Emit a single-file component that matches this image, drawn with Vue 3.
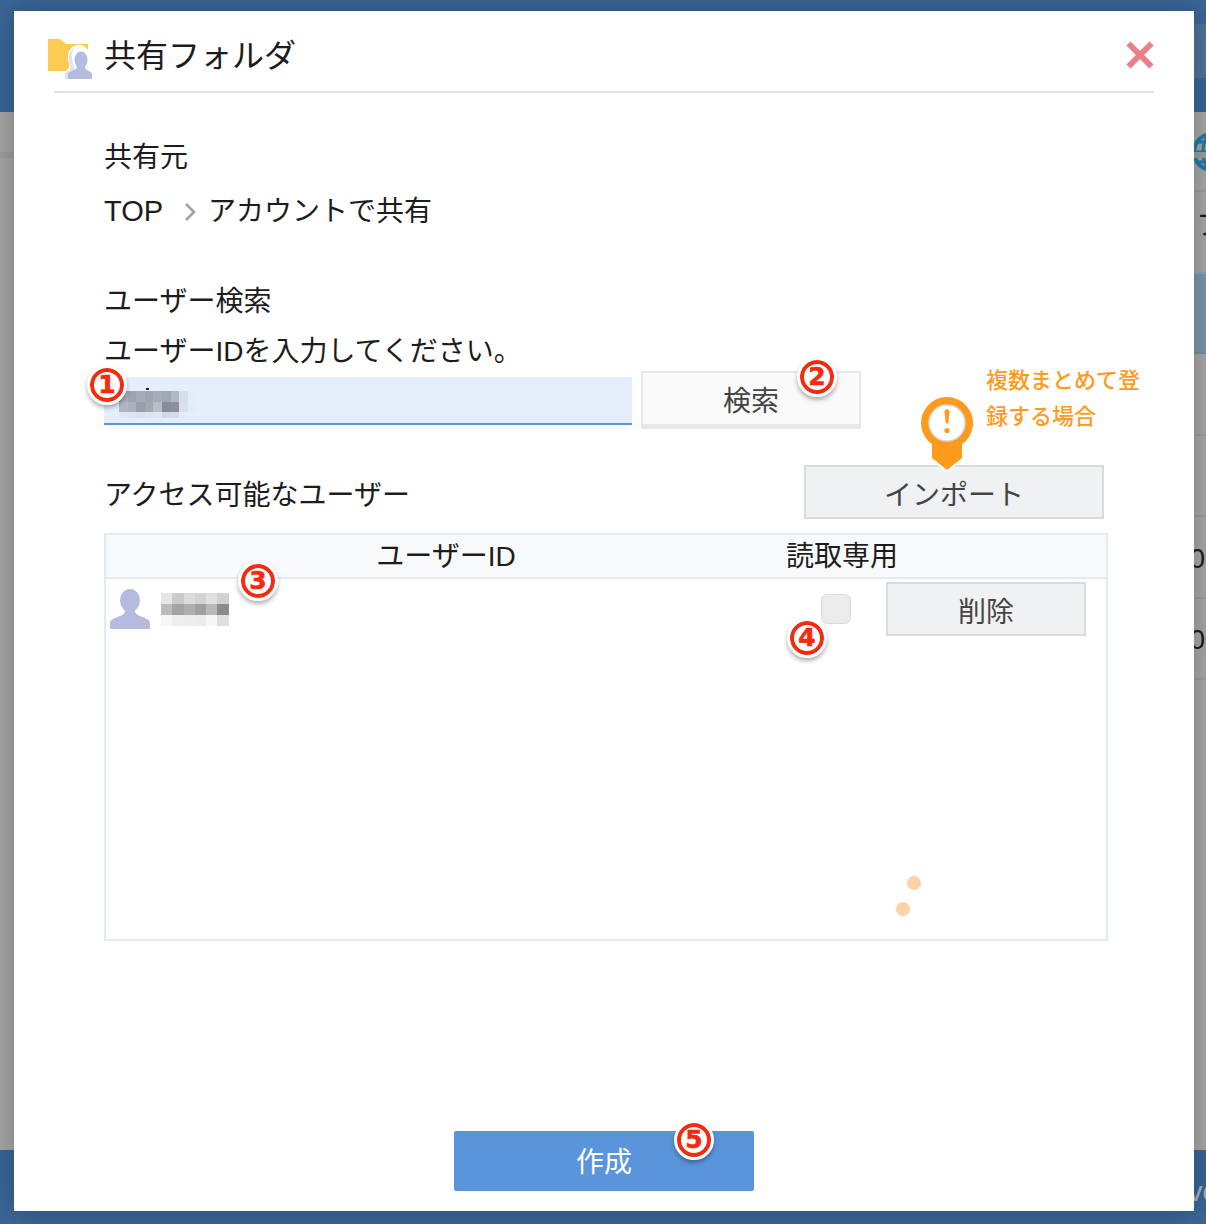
<script setup>
const badges = [
  { n: '1', x: 107, y: 385 },
  { n: '2', x: 817, y: 377 },
  { n: '3', x: 258, y: 581 },
  { n: '4', x: 807, y: 638 },
  { n: '5', x: 694, y: 1140 }
]
const inputMosaic = {
  cols: 9,
  w: 8.6,
  rows: [
    { h: 11, c: ['#a9aebb', '#9ea3af', '#a7acb9', '#a0a5b1', '#a7acba', '#a2a7b3', '#b3b8c4', '#d7deea', '#e4edf9'] },
    { h: 10, c: ['#b1b6c3', '#aab0bc', '#9a9fab', '#a2a7b2', '#b8bdc9', '#888c98', '#8c909c', '#d9e0ec', '#e3ecf8'] },
    { h: 6, c: ['#dfe7f3', '#dde5f1', '#dae2ee', '#dce4f0', '#dfe7f3', '#d3dae6', '#d6dde9', '#e3ecf8', '#e5effc'] }
  ]
}
const userMosaic = {
  cols: 6,
  w: 11.3,
  rows: [
    { h: 11, c: ['#e6e6e6', '#cbcbcb', '#dcdcdc', '#d3d3d3', '#e0e0e0', '#d2d2d2'] },
    { h: 11, c: ['#bcbcbc', '#a4a4a4', '#aeaeae', '#a0a0a0', '#b8b8b8', '#8c8c8c'] },
    { h: 11, c: ['#f6f6f6', '#efefef', '#ededed', '#ebebeb', '#f6f6f6', '#dfdfdf'] }
  ]
}
const mosaicCells = (m) => m.rows.flatMap((r, i) => r.c.map((color, j) => ({
  key: i + '-' + j,
  color,
  h: r.h,
  w: m.w
})))
const inputCells = mosaicCells(inputMosaic)
const userCells = mosaicCells(userMosaic)
</script>

<template>
  <div class="page">
    <div class="backdrop">
      <div class="top-bar"><div class="top-band"></div></div>
      <div class="sub-bar">
        <svg class="globe" viewBox="0 0 44 44" width="44" height="44">
          <circle cx="22" cy="22" r="18" fill="none" stroke="#1f7ba5" stroke-width="4" />
          <ellipse cx="22" cy="22" rx="9" ry="18" fill="none" stroke="#1f7ba5" stroke-width="3" />
          <path d="M3 22H41M7 12H37M7 32H37" fill="none" stroke="#1f7ba5" stroke-width="3" />
        </svg>
      </div>
      <div class="strip"></div>
      <div class="bg-list">
        <div class="bg-row first"></div>
        <div class="bg-row tall"><span class="bg-kana">フ</span></div>
        <div class="bg-row selected"></div>
        <div class="bg-row"></div>
        <div class="bg-row"></div>
        <div class="bg-row"><span class="bg-zero">0</span></div>
        <div class="bg-row"><span class="bg-zero">0</span></div>
      </div>
      <div class="foot-bar"><span class="foot-text">ve</span></div>
    </div>

    <div class="modal">
      <header class="title-row">
        <svg class="folder" viewBox="0 0 44 40" width="44" height="40">
          <path d="M0 0H12L18 5H40V32H0Z" fill="#fdcb52" />
          <path d="M16 40V33C21 30 22 28 21 24C19 20 19 8 29 6C36 5 41 10 41 16L44 40Z" fill="#fff" />
          <path d="M17 40V34C21 32 23 30 22 26C20 22 20 11 26 9C22 16 25 26 27 30L26 40Z" fill="#e0e3f2" />
          <ellipse cx="33" cy="21" rx="6.500" ry="8.500" fill="#b5bbdf" />
          <path d="M20 40V35C20 33 25 32 28 30C29 29 29 28 29 26H37C37 28 37 29 38 30C40 32 44 33 44 35V40Z" fill="#b5bbdf" />
        </svg>
        <h1 class="title">共有フォルダ</h1>
        <svg class="close" viewBox="0 0 28 28" width="28" height="28">
          <path d="M2.500 2.500L25.500 25.500M25.500 2.500L2.500 25.500" stroke="#e8808c" stroke-width="6" fill="none" />
        </svg>
      </header>

      <div class="body">
        <p class="line first-line">共有元</p>
        <div class="line crumbs">
          <span class="top-word">TOP</span>
          <svg class="chev" viewBox="0 0 12 20" width="12" height="20">
            <path d="M2 2L10 10L2 18" fill="none" stroke="#a3a3a3" stroke-width="2.600" />
          </svg>
          <span>アカウントで共有</span>
        </div>
        <p class="line section">ユーザー検索</p>
        <p class="line prompt">ユーザーIDを入力してください。</p>

        <div class="search-row">
          <div class="input">
            <i class="input-dot"></i>
            <div class="mosaic input-mosaic">
              <i v-for="c in inputCells" :key="c.key" :style="{ background: c.color, width: c.w + 'px', height: c.h + 'px' }"></i>
            </div>
          </div>
          <button class="search-btn">検索</button>
        </div>

        <div class="access-row">
          <span class="access-label">アクセス可能なユーザー</span>
          <button class="btn import-btn">インポート</button>
        </div>

        <div class="table">
          <div class="thead">
            <span class="th-user">ユーザーID</span>
            <span class="th-read">読取専用</span>
          </div>
          <div class="tr">
            <svg class="avatar" viewBox="0 0 42 40" width="40" height="40" preserveAspectRatio="none">
              <ellipse cx="21" cy="11.500" rx="10.500" ry="11.500" fill="#b5bbdf" />
              <path d="M0 40V34C0 30 6 29 13 26C15 25 16 23 16 20H26C26 23 27 25 29 26C36 29 42 30 42 34V40Z" fill="#b5bbdf" />
            </svg>
            <div class="mosaic user-mosaic">
              <i v-for="c in userCells" :key="c.key" :style="{ background: c.color, width: c.w + 'px', height: c.h + 'px' }"></i>
            </div>
            <span class="check"></span>
            <button class="btn delete-btn">削除</button>
          </div>
          <i class="dot dot-a"></i>
          <i class="dot dot-b"></i>
        </div>

        <div class="footer"><button class="create">作成</button></div>
      </div>

      <div class="callout">
        <svg class="pin" viewBox="0 0 60 82" width="60" height="82">
          <path d="M15 49.200A26 26 0 1 1 45 49.200V63L30 75L15 63Z" fill="#fe9a1c" stroke="#fff" stroke-width="4" paint-order="stroke" />
          <circle cx="30" cy="28" r="18" fill="#fff" stroke="#d9d9d9" stroke-width="1.500" />
          <path d="M27.500 16.500C27.500 13.500 32.500 13.500 32.500 16.500L31.300 28.500H28.700Z" fill="#fe9a1c" />
          <circle cx="30" cy="35.500" r="2.600" fill="#fe9a1c" />
        </svg>
        <p class="callout-text">複数まとめて登録する場合</p>
      </div>

      <span v-for="b in badges" :key="b.n" class="badge" :style="{ left: b.x - 31 + 'px', top: b.y - 28 + 'px' }">{{ b.n }}</span>
    </div>
  </div>
</template>

<style>
html, body { margin: 0; background: #a5a5a5; }
</style>

<style scoped>
.page {
  position: relative;
  width: 1206px;
  height: 1224px;
  overflow: hidden;
  font-family: "Liberation Sans", "Noto Sans CJK JP", sans-serif;
  color: #1c1c1c;
}
.backdrop {
  display: flex;
  flex-direction: column;
  height: 100%;
  background: #a5a5a5;
}
.top-bar {
  height: 112px;
  background: #3a6596;
  padding-top: 24px;
  box-sizing: border-box;
}
.top-band {
  height: 54px;
  margin-left: 1194px;
  background: #4d7299;
}
.sub-bar {
  height: 40px;
  display: flex;
  justify-content: flex-end;
  align-items: center;
}
.globe {
  flex: none;
  margin-top: 40px;
  margin-right: -28px;
}
.strip {
  height: 6px;
  background: #9b9b9b;
}
.bg-list {
  flex: 1;
  margin-left: 400px;
  display: flex;
  flex-direction: column;
  overflow: hidden;
}
.bg-row {
  flex: none;
  height: 81.500px;
  box-sizing: border-box;
  border-bottom: 2px solid #939ba3;
  display: flex;
  justify-content: flex-end;
  align-items: center;
}
.bg-row.first {
  height: 34px;
  border-bottom-color: #979a9d;
}
.bg-row.tall {
  height: 82px;
  border-bottom: 2px solid #8fa3b3;
  align-items: flex-start;
  padding-top: 14px;
}
.bg-row.selected {
  height: 80px;
  background: #7797aa;
  border-bottom-color: #6f8fa6;
}
.bg-kana {
  font-size: 28px;
  line-height: 40px;
  margin-right: -18px;
}
.bg-zero {
  font-size: 28px;
  margin-right: 1px;
  padding-top: 4px;
}
.foot-bar {
  height: 74px;
  flex: none;
  background: #3a6596;
  display: flex;
  justify-content: flex-end;
  align-items: center;
  overflow: hidden;
}
.foot-text {
  color: #a9b3bd;
  font-size: 28px;
  margin-right: -12px;
  margin-top: 10px;
}

.modal {
  position: absolute;
  left: 14px;
  top: 11px;
  width: 1180px;
  height: 1200px;
  background: #fff;
  box-shadow: 0 0 24px rgba(0, 0, 0, 0.25);
  display: flex;
  flex-direction: column;
}
.title-row {
  flex: none;
  height: 82px;
  margin: 0 40px;
  box-sizing: border-box;
  border-bottom: 2px solid #dde2e6;
  display: flex;
  align-items: flex-start;
}
.folder {
  flex: none;
  margin: 28px 0 0 -6px;
}
.title {
  margin: 24px 0 0 12px;
  font-size: 32px;
  line-height: 42px;
  font-weight: 400;
  flex: 1;
}
.close {
  flex: none;
  margin-top: 30px;
}
.body {
  flex: 1;
  display: flex;
  flex-direction: column;
  padding: 0 86px 20px 90px;
  min-height: 0;
}
.line {
  margin: 0;
  font-size: 28px;
  line-height: 40px;
}
.first-line { margin-top: 45px; padding-bottom: 1px; }
.crumbs {
  margin-top: 13px;
  display: flex;
  align-items: center;
}
.top-word { font-size: 29px; line-height: 38px; margin-top: -3px; }
.chev { margin: 0 12px 0 21px; flex: none; }
.section { margin-top: 50px; }
.prompt { margin-top: 10px; }
.search-row {
  margin-top: -1px;
  display: flex;
  align-items: flex-start;
  gap: 9px;
}
.input {
  position: relative;
  width: 528px;
  height: 48px;
  margin-top: 6px;
  box-sizing: border-box;
  background: #e5effc;
  border-bottom: 2px solid #5b95da;
}
.input-dot {
  position: absolute;
  left: 42px;
  top: 11px;
  width: 3px;
  height: 2px;
  background: #222;
}
.mosaic {
  display: flex;
  flex-wrap: wrap;
  flex: none;
}
.mosaic i { display: block; flex: none; }
.input-mosaic {
  position: absolute;
  left: 15px;
  top: 14px;
  width: 77.400px;
}
.search-btn {
  width: 220px;
  height: 58px;
  box-sizing: border-box;
  background: #fafafa;
  border: 2px solid #e7e7e7;
  border-bottom-width: 5px;
  color: #444;
  font: inherit;
  font-size: 28px;
  padding: 0;
}
.access-row {
  margin-top: 36px;
  width: 1000px;
  display: flex;
  align-items: center;
  justify-content: space-between;
}
.access-label {
  font-size: 28px;
  line-height: 40px;
  padding-top: 7px;
}
.btn {
  box-sizing: border-box;
  background: #f0f1f3;
  border: 2px solid #dadbdc;
  color: #444;
  font: inherit;
  font-size: 28px;
  padding: 2px 0 0;
}
.import-btn { width: 300px; height: 54px; margin-right: 0; }
.table {
  position: relative;
  margin-top: 14px;
  width: 1004px;
  height: 408px;
  box-sizing: border-box;
  border: 2px solid #e1ebf3;
}
.thead {
  height: 44px;
  padding-top: 1px;
  box-sizing: border-box;
  background: #f8f9fa;
  border-bottom: 2px solid #e1ebf3;
  display: grid;
  grid-template-columns: 680px 112px 1fr;
  align-items: center;
  font-size: 28px;
  line-height: 40px;
  text-align: center;
}
.th-user, .th-read { white-space: nowrap; }
.th-read { grid-column: 2; }
.tr {
  display: flex;
  align-items: flex-start;
  padding: 3px 20px 0 4px;
}
.avatar { flex: none; margin-top: 7px; }
.user-mosaic {
  margin: 11px 0 0 11px;
  width: 67.800px;
}
.check {
  flex: none;
  margin: 12px 35px 0 auto;
  width: 30px;
  height: 30px;
  box-sizing: border-box;
  background: #ececec;
  border: 1px solid #dcdcdc;
  border-radius: 6px;
}
.delete-btn {
  flex: none;
  width: 200px;
  height: 54px;
}
.dot {
  position: absolute;
  width: 14px;
  height: 14px;
  border-radius: 50%;
  background: #fdd2a6;
}
.dot-a { left: 801px; top: 341px; }
.dot-b { left: 790px; top: 367px; }
.footer {
  margin-top: auto;
  margin-left: 350px;
}
.create {
  display: block;
  width: 300px;
  height: 60px;
  border: 0;
  border-radius: 2px;
  background: #5a95db;
  color: #fff;
  font: inherit;
  font-size: 28px;
  padding: 0 0 2px;
}

.callout {
  position: absolute;
  left: 903px;
  top: 384px;
  display: flex;
}
.pin {
  flex: none;
}
.callout-text {
  margin: -32px 0 0 9px;
  width: 160px;
  font-size: 22px;
  line-height: 36px;
  color: #fe9a1c;
  font-weight: 500;
}
.badge {
  position: absolute;
  width: 34px;
  height: 34px;
  box-sizing: border-box;
  border-radius: 50%;
  border: 4px solid #f52a0e;
  background: #fff;
  color: #f52a0e;
  outline: 3px solid #fff;
  box-shadow: 0 3px 4px 3px rgba(0, 0, 0, 0.3);
  font-family: "DejaVu Sans", sans-serif;
  font-weight: 700;
  font-size: 25px;
  line-height: 26px;
  text-align: center;
  -webkit-text-stroke: 0.6px #f52a0e;
}
</style>
